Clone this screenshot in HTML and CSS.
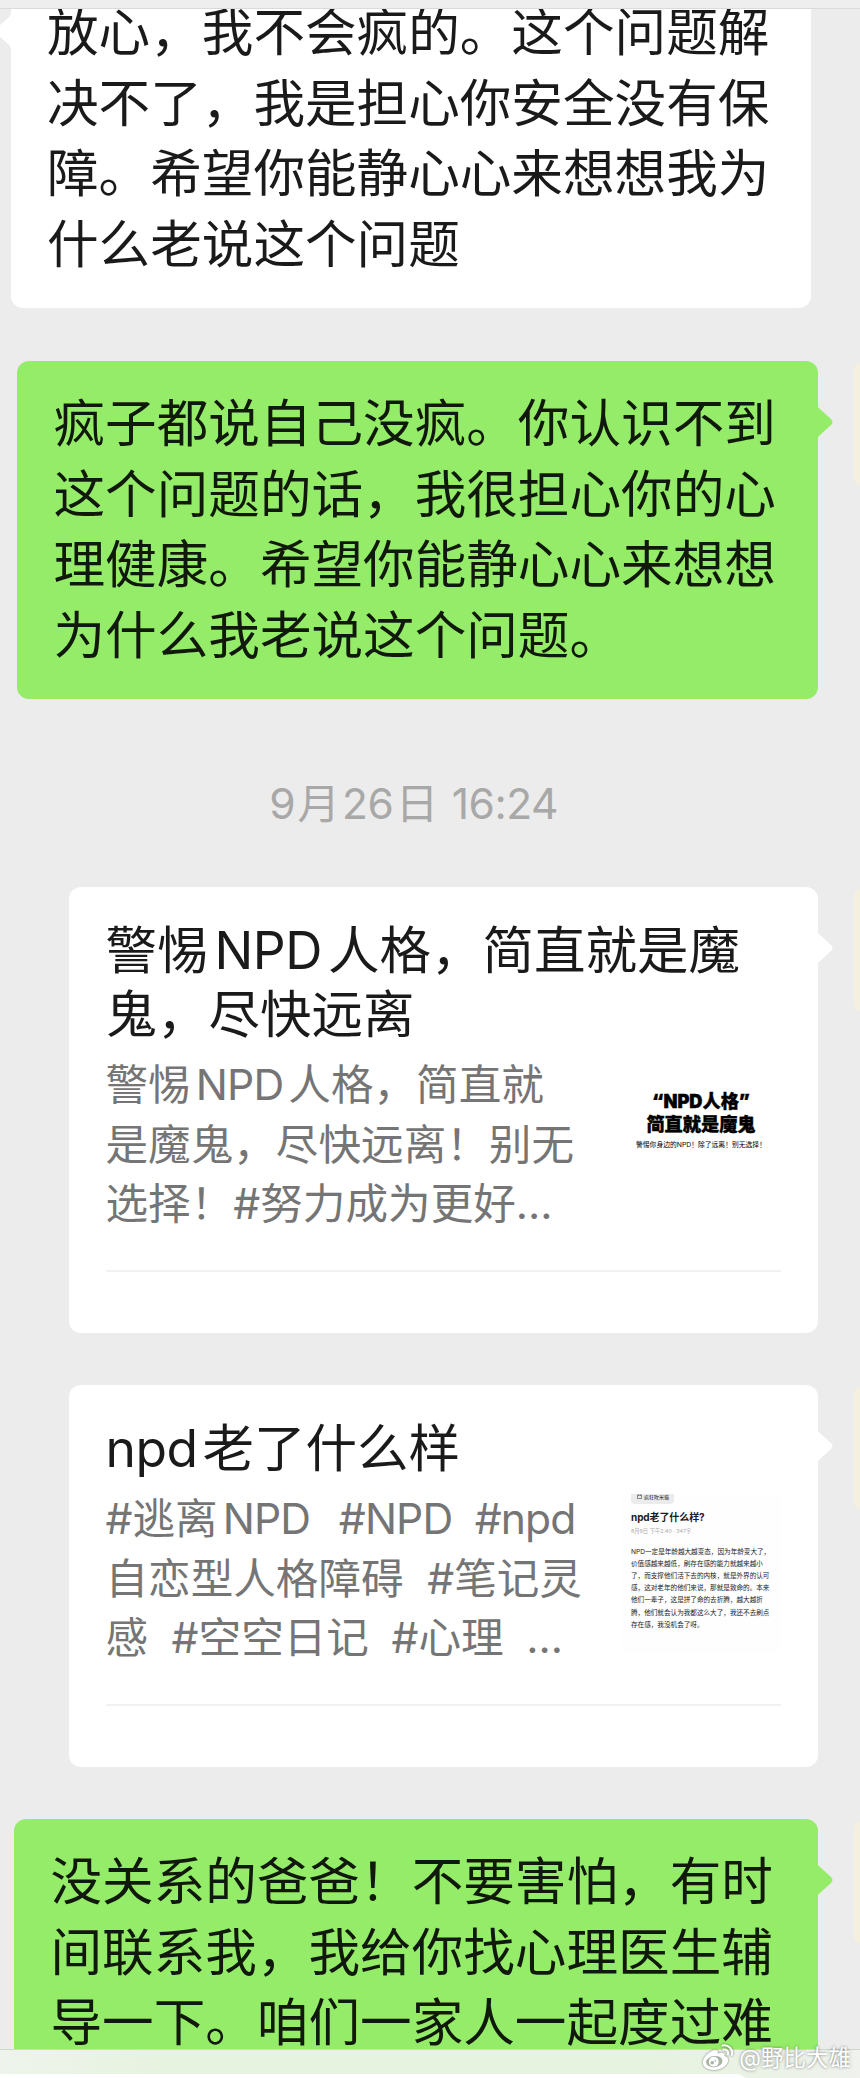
FILE: index.html
```
<!DOCTYPE html>
<html lang="zh-CN">
<head>
  <meta charset="UTF-8" />
  <meta name="viewport" content="width=device-width, initial-scale=1.0" />
  <title>聊天记录</title>
  <link rel="stylesheet" href="styles.css">
</head>
<body>
  <div class="screen">
    <header class="topbar"></header>

    <!-- Messages -->
    <main class="chat">
      <div class="row first">
        <div class="bubble left">
          <p>放心，我不会疯的。这个问题解</p>
          <p>决不了，我是担心你安全没有保</p>
          <p>障。希望你能静心心来想想我为</p>
          <p>什么老说这个问题</p>
          <svg class="tail" viewBox="0 0 16 38"><path d="M0 0C0 3 1 4 3 6L14 16Q17 19 14 22L3 32C1 34 0 35 0 38Z"/></svg>
        </div>
      </div>

      <div class="row mine">
        <div class="bubble green">
          <p>疯子都说自己没疯。你认识不到</p>
          <p>这个问题的话，我很担心你的心</p>
          <p>理健康。希望你能静心心来想想</p>
          <p>为什么我老说这个问题。</p>
          <svg class="tail" viewBox="0 0 16 38"><path d="M0 0C0 3 1 4 3 6L14 16Q17 19 14 22L3 32C1 34 0 35 0 38Z"/></svg>
        </div>
        <div class="avatar"></div>
      </div>

      <div class="time">9<i>月</i>26<i>日</i> 16:24</div>

      <div class="row mine">
        <article class="card">
          <h2>
            <span class="line">警惕<span class="en">NPD</span>人格，简直就是魔</span>
            <span class="line">鬼，尽快远离</span>
          </h2>
          <div class="info">
            <div class="desc">
              <p>警惕<span class="en">NPD</span>人格，简直就</p>
              <p>是魔鬼，尽快远离！别无</p>
              <p>选择！#努力成为更好<span class="dots">...</span></p>
            </div>
            <div class="thumb poster">
              <b>“NPD人格”</b>
              <b>简直就是魔鬼</b>
              <small>警惕你身边的NPD！除了远离！别无选择！</small>
            </div>
          </div>
          <hr>
          <svg class="tail" viewBox="0 0 16 38"><path d="M0 0C0 3 1 4 3 6L14 16Q17 19 14 22L3 32C1 34 0 35 0 38Z"/></svg>
        </article>
        <div class="avatar"></div>
      </div>

      <div class="row mine">
        <article class="card">
          <h2><span class="line"><span class="en start">npd</span>老了什么样</span></h2>
          <div class="info">
            <div class="desc">
              <p>#逃离<span class="en">NPD</span><span class="tag latin">#NPD</span><span class="tag latin">#npd</span></p>
              <p>自恋型人格障碍<span class="tag">#笔记灵</span></p>
              <p>感<span class="tag">#空空日记</span><span class="tag">#心理</span><span class="tag dots">...</span></p>
            </div>
            <div class="thumb note">
              <div class="chip">
                <svg viewBox="0 0 6 6"><path d="M.5 1.5h5v4h-5zM1.5 .4v1.4M4.4 .4v1.4"/></svg>
                疯狂吹米猫
              </div>
              <b>npd老了什么样?</b>
              <small>8月9日 下午2:40 · 347字</small>
              <p>NPD一定是年龄越大越变态，因为年龄变大了，</p>
              <p>价值感越来越低，刷存在感的能力就越来越小</p>
              <p>了，而支撑他们活下去的内核，就是外界的认可</p>
              <p>感，这对老年的他们来说，那就是致命的。本来</p>
              <p>他们一辈子，这是拼了命的去折腾，越大越折</p>
              <p>腾，他们就会认为我都这么大了，我还不去刷点</p>
              <p>存在感，我没机会了呀。</p>
            </div>
          </div>
          <hr>
          <svg class="tail" viewBox="0 0 16 38"><path d="M0 0C0 3 1 4 3 6L14 16Q17 19 14 22L3 32C1 34 0 35 0 38Z"/></svg>
        </article>
        <div class="avatar"></div>
      </div>

      <div class="row mine">
        <div class="bubble green wide">
          <p>没关系的爸爸！不要害怕，有时</p>
          <p>间联系我，我给你找心理医生辅</p>
          <p>导一下。咱们一家人一起度过难</p>
          <svg class="tail" viewBox="0 0 16 38"><path d="M0 0C0 3 1 4 3 6L14 16Q17 19 14 22L3 32C1 34 0 35 0 38Z"/></svg>
        </div>
        <div class="avatar"></div>
      </div>
    </main>

    <!-- Input bar -->
    <footer class="inputbar"><div class="field"></div></footer>

    <div class="watermark">
      <svg viewBox="0 0 32 28">
        <path class="fill" d="M11 6.500C14 5.200 16.500 6 15.800 9.500C20 7.800 23.500 8.600 22.400 12C26 13 27 16 25.400 19C23.500 23 18 26 12 26C5 26 .8 22.500 .8 18.500C.8 14 6 8.500 11 6.500Z"/>
        <ellipse class="hole" cx="12.300" cy="17.600" rx="8.200" ry="5.600" transform="rotate(-8 12.300 17.600)"/>
        <circle class="fill" cx="11.800" cy="17.700" r="4.900"/>
        <circle class="hole" cx="10.300" cy="18.800" r="1.800"/>
        <circle class="hole" cx="13.200" cy="16.900" r=".8"/>
        <path class="arc" d="M20.500 1.500C26.500 .2 31.500 5.500 29.800 11.200M21.300 5.600C24.500 5 26.800 7.500 26 10.400"/>
      </svg>
      <span>@野比大雄</span>
    </div>
  </div>
</body>
</html>
```
FILE: styles.css
```
/* ---------- Base ---------- */
*, *::before, *::after { box-sizing: border-box; margin: 0; padding: 0; }
body {
  font-family: Inter, "Noto Sans CJK SC", sans-serif;
  background: #ececec;
  color: #1a1a1a;
}
i { font-style: normal; }
.screen {
  position: relative;
  display: flex;
  flex-direction: column;
  width: 860px;
  height: 2078px;
  overflow: hidden;
}
.topbar {
  flex: none;
  height: 9px;
  background: #eeeeef;
  border-bottom: 1px solid #dadada;
}
.chat { flex: 1; min-height: 0; overflow: hidden; }

/* ---------- Rows ---------- */
.row { display: flex; margin-bottom: 52px; }
.row.first { margin: -39px 0 53px 10.5px; }
.row.mine { justify-content: flex-end; align-items: flex-start; }
.avatar {
  flex: none;
  width: 6px;
  height: 122px;
  margin: 2px 0 0 36.5px;
  background: #f5efdf;
  border-radius: 8px 0 0 8px;
}

/* ---------- Text bubbles ---------- */
.bubble {
  position: relative;
  width: 800.5px;
  height: 338px;
  padding: 24px 0 0 36.5px;
  border-radius: 12px;
  background: #fff;
  font-family: "Noto Sans CJK SC", sans-serif;
  font-size: 51.6px;
  line-height: 70.5px;
  white-space: nowrap;
}
.bubble.green { background: #95ec69; color: #10190b; }
.bubble.wide { width: 803.5px; }
.tail {
  position: absolute;
  top: 42px;
  right: -15.5px;
  width: 16px;
  height: 38px;
  fill: #fff;
}
.green .tail { fill: #95ec69; }
.left .tail { right: auto; left: -15.5px; transform: scaleX(-1); }

.time {
  height: 188px;
  margin-top: -52px;
  padding-right: 33px;
  font-size: 42.5px;
  line-height: 209px;
  letter-spacing: -.5px;
  color: #a8a8a8;
  text-align: center;
  white-space: nowrap;
}
.time i { margin: 0 2.5px; }

/* ---------- Link cards ---------- */
.card {
  position: relative;
  width: 748.5px;
  padding: 30.5px 36.5px 61px 36.5px;
  border-radius: 12px;
  background: #fff;
}
.card h2 { font-size: 51.5px; font-weight: 400; line-height: 64.3px; }
.line { display: block; white-space: nowrap; }
.en { margin: 0 6px; letter-spacing: -.5px; }
.en.start { margin: 0 5px 0 0; }
.info { display: flex; justify-content: space-between; margin-top: 9px; }
.desc { font-size: 42.6px; line-height: 59.6px; color: #757575; white-space: nowrap; }
.desc .en { margin: 0 5px; letter-spacing: -.8px; }
.tag { margin-left: 23.5px; }
.tag.latin { letter-spacing: -.9px; }
.tag + .tag { margin-left: 22.5px; }
.card hr { height: 2px; margin-top: 36.5px; border: 0; background: #f1f1f1; }

.thumb {
  flex: none;
  width: 160px;
  height: 159px;
  margin-top: 4.5px;
  overflow: hidden;
  white-space: nowrap;
}
.poster {
  display: flex;
  flex-direction: column;
  align-items: center;
  padding-top: 30px;
  color: #000;
}
.poster b {
  font: 900 18.200px/23px Inter, "Noto Sans CJK SC", sans-serif;
  -webkit-text-stroke: .4px #000;
}
.poster small { margin-top: 3px; font-size: 6.800px; line-height: 12px; }
.note { padding-left: 10px; background: #fefefe; }
.chip {
  display: flex;
  align-items: center;
  gap: 2px;
  width: 43px;
  height: 10px;
  padding: 0 0 4px 6px;
  border-radius: 0 0 4px 4px;
  background: #ebebeb;
  font-size: 5px;
  line-height: 6px;
}
.chip svg { width: 5px; height: 5px; fill: none; stroke: #333; stroke-width: .7; }
.note b { display: block; margin-top: 4px; font-size: 10px; font-weight: 700; line-height: 18px; letter-spacing: -.1px; }
.note small { display: block; margin: 0 0 9px; font-size: 5.300px; line-height: 11px; color: #aaa; }
.note p { font-size: 6.600px; line-height: 12.200px; color: #222; }

/* ---------- Bottom bar ---------- */
.inputbar {
  flex: none;
  height: 29px;
  padding-top: 24px;
  border-top: 1px solid #cfd6ca;
  background: linear-gradient(90deg, #eef4ec, #e6f3de 20%, #e6f3de 75%, #eff2ed);
}
.field { width: 748px; height: 30px; border-radius: 0 12px 0 0; background: #fff; }

.watermark {
  position: absolute;
  right: 9px;
  bottom: 5px;
  display: flex;
  align-items: center;
  gap: 5px;
  color: #fff;
  font-size: 22.500px;
  line-height: 30px;
  text-shadow: 0 0 3px rgba(0, 0, 0, .5);
}
.watermark svg { width: 32px; height: 28px; filter: drop-shadow(0 0 1px rgba(0, 0, 0, .5)); }
.fill { fill: #fff; }
.hole { fill: #a9b3a4; }
.arc { fill: none; stroke: #fff; stroke-width: 2; stroke-linecap: round; }
```
